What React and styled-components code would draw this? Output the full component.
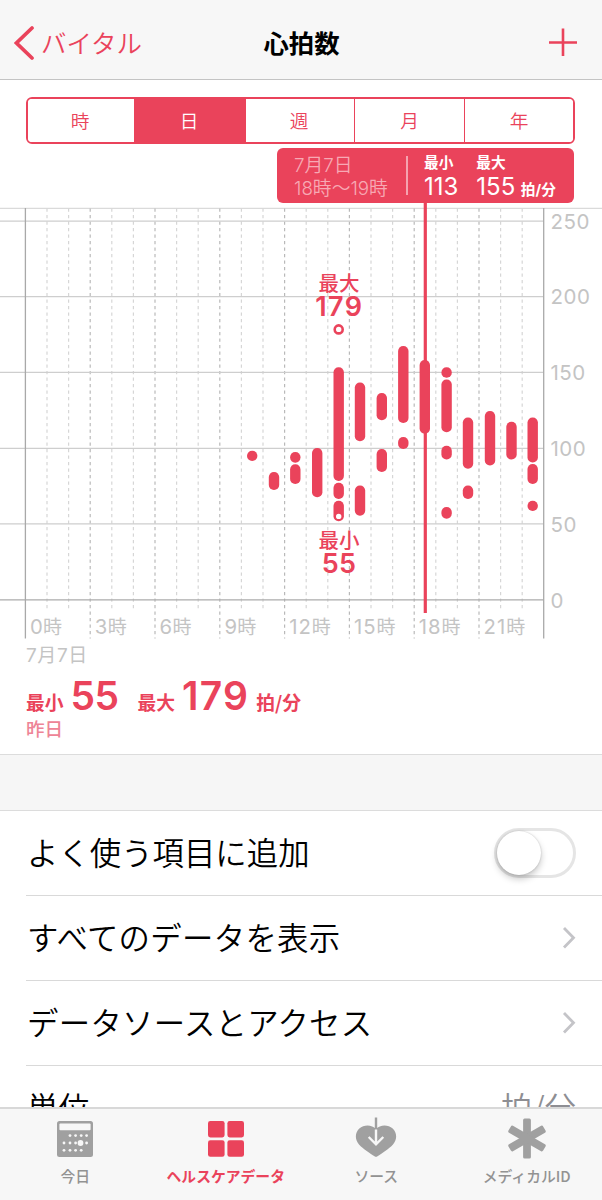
import styled, { createGlobalStyle } from 'styled-components'

const pink = '#ea435b';
const grey = '#c4c4c4';
const sans = `Inter, "Noto Sans CJK JP", sans-serif`;

const GlobalStyle = createGlobalStyle`
  * {
    box-sizing: border-box;
  }

  body {
    margin: 0;
    background-color: white;
    font-family: "Noto Sans CJK JP", sans-serif;
  }
`;

const Screen = styled.div`
  width: 602px;
  height: 1200px;
  display: flex;
  flex-direction: column;
  overflow: hidden;
  color: black;
`;

const Header = styled.header`
  flex: none;
  height: 80px;
  padding: 5px 25px 0 14px;
  display: grid;
  grid-template-columns: 1fr auto 1fr;
  align-items: center;
  background-color: #f7f7f7;
  border-bottom: 1.5px solid #c4c4c4;
`;

const Back = styled.div`
  display: flex;
  align-items: center;
  gap: 7px;
  color: ${pink};
  font-size: 25.5px;
  font-weight: 350;
  line-height: 36px;

  & > svg {
    position: relative;
    top: 1px;
  }
`;

const Title = styled.h1`
  margin: 0 0 0 12px;
  font-size: 25.4px;
  font-weight: 700;
  line-height: 36px;
`;

const Add = styled.div`
  display: flex;
  justify-content: flex-end;
`;

const Segments = styled.div`
  flex: none;
  height: 47px;
  margin: 17px 27px 0 26px;
  display: grid;
  grid-template-columns: 106px 111px 109px 110px 1fr;
  border: 2px solid ${pink};
  border-radius: 6px;
  overflow: hidden;
`;

const Segment = styled.div`
  padding: 0 2px 3px 0;
  display: flex;
  align-items: center;
  justify-content: center;
  font-size: 18.7px;
  font-weight: 350;
  color: ${props => props.active ? 'white' : pink};
  background-color: ${props => props.active ? pink : 'white'};

  & + & {
    border-left: 1.5px solid ${pink};
  }

  &:nth-child(n + 4) {
    padding-right: 0;
  }
`;

const Callout = styled.div`
  flex: none;
  width: 297px;
  height: 55px;
  margin: 4px 0 0 277px;
  padding: 4px 0 0 16px;
  display: flex;
  border-radius: 6px;
  background-color: ${pink};
  color: white;
`;

const When = styled.div`
  width: 115px;
  height: 39px;
  margin-top: 4px;
  padding-left: 1px;
  border-right: 2px solid #f5a3af;
  font-family: ${sans};
  font-size: 18.8px;
  font-weight: 350;
  line-height: 23px;
  color: #f7a9b4;

  & > div {
    margin-top: -2px;
    margin-bottom: 2px;
    white-space: nowrap;
  }
`;

const Stat = styled.div`
  margin-left: ${props => props.gap}px;
  font-size: 14.7px;
  font-weight: 700;
  line-height: 20px;
  white-space: nowrap;
`;

const StatValue = styled.div`
  font-family: ${sans};
  font-size: 14.7px;
  line-height: 29px;

  & > b {
    margin-right: 2px;
    font-size: 24px;
    font-weight: 400;
    letter-spacing: 0;
  }
`;

const Chart = styled.svg`
  flex: none;
  display: block;
  width: 602px;
  height: 436px;
  font-family: ${sans};
`;

const Summary = styled.section`
  flex: none;
  height: 116px;
  padding-left: 26px;
  border-bottom: 1px solid #dcdcdc;
  color: ${pink};
`;

const ChartDate = styled.div`
  height: 29px;
  font-family: ${sans};
  font-size: 19px;
  letter-spacing: .6px;
  line-height: 33px;
  color: ${grey};
`;

const Totals = styled.div`
  height: 48px;
  display: flex;
  align-items: baseline;
  font-size: 18.8px;
  font-weight: 700;
  line-height: 55px;
`;

const Total = styled.span`
  margin: 0 ${props => props.after}px 0 7px;
  font-family: Inter, sans-serif;
  font-size: 39px;
  font-weight: 600;
  letter-spacing: ${props => props.wide ? '1.2px' : '-.6px'};
`;

const Yesterday = styled.div`
  font-size: 18.6px;
  font-weight: 500;
  line-height: 23px;
  color: #ee8496;
`;

const Spacer = styled.div`
  flex: none;
  height: 56px;
  background-color: #f6f6f6;
  border-bottom: 1px solid #dcdcdc;
`;

const List = styled.div`
  flex: 1;
  min-height: 0;
  overflow: hidden;
  padding-left: 26px;
`;

const Row = styled.div`
  height: 85px;
  padding: 0 26px 0 1px;
  display: flex;
  align-items: center;
  justify-content: space-between;
  border-bottom: 1px solid #d9d9d9;
  font-size: 31.4px;
  font-weight: 350;
`;

const Label = styled.span`
  margin-top: -3px;
  letter-spacing: ${props => props.kana ? '.3px' : 'normal'};
`;

const Unit = styled(Label)`
  color: #8e8e93;
`;

const Toggle = styled.div`
  width: 82px;
  height: 50px;
  border: 3px solid #e5e5e5;
  border-radius: 25px;

  &::before {
    content: '';
    display: block;
    width: 44px;
    height: 44px;
    border-radius: 50%;
    background-color: white;
    box-shadow: 0 4px 7px rgba(0, 0, 0, .22), 0 0 2px rgba(0, 0, 0, .2);
  }
`;

const TabBar = styled.nav`
  flex: none;
  height: 93px;
  display: grid;
  grid-template-columns: repeat(4, 1fr);
  background-color: #f7f7f7;
  border-top: 2px solid #d8d8d8;
`;

const Tab = styled.div`
  padding-top: 8px;
  display: flex;
  flex-direction: column;
  align-items: center;
  font-size: 14.8px;
  font-weight: ${props => props.active ? 700 : 500};
  line-height: 24px;
  white-space: nowrap;
  color: ${props => props.active ? pink : '#929292'};

  & > svg {
    margin-bottom: 6px;
  }
`;

// one entry per hour mark: [x, [[top, bottom], ...]]
const bars = [
  [252.2, [[450.7, 461]]],
  [274, [[472, 490]]],
  [295.3, [[452, 462.7], [464.3, 484]]],
  [317.2, [[448, 497.3]]],
  [338.7, [[367.3, 481], [482.7, 499], [500.7, 521.3]]],
  [360, [[382.5, 441.3], [485.5, 515.7]]],
  [381.8, [[393, 420.3], [449, 472]]],
  [403.3, [[346, 423], [437, 449]]],
  [424.8, [[360, 433.7]]],
  [446.6, [[367.3, 377.8], [379.5, 432.3], [445.7, 459.5], [507, 518.7]]],
  [468, [[417.5, 468.7], [485.5, 499]]],
  [490, [[411, 465.5]]],
  [511.5, [[421.7, 459.5]]],
  [532.7, [[417.5, 462.5], [464, 484], [500.7, 511]]],
];

const levels = [[250, 221.2], [200, 296.7], [150, 372.3], [100, 448.3], [50, 523.8], [0, 599.8]];
const hours = Array.from({ length: 23 }, (_, i) => i + 1);
const hourX = hour => 25.4 + hour * 21.6;

function HeartChart() {
  return (
    <Chart viewBox="0 203 602 436">
      <line x1="0" x2="602" y1="208.3" y2="208.3" stroke="#dadada" strokeWidth="1.3" />
      {hours.map(hour => (
        <line
          key={hour}
          x1={hourX(hour)}
          x2={hourX(hour)}
          y1="208.5"
          y2={hour % 3 ? 609.5 : 638.5}
          stroke={hour % 3 ? '#d6d6d6' : '#b9b9b9'}
          strokeWidth="1.2"
          strokeDasharray="3.2 3.3"
        />
      ))}
      {levels.map(([value, y]) => (
        <g key={value}>
          <line x1="0" x2="543.7" y1={y} y2={y} stroke={value ? '#cecece' : '#ababab'} strokeWidth="1.3" />
          <text x="550.5" y={y + 7.7} fontSize="20.5" letterSpacing=".5" fill={grey}>{value}</text>
        </g>
      ))}
      <line x1="25.4" x2="25.4" y1="208" y2="638.5" stroke="#a9a9a9" strokeWidth="1.3" />
      <line x1="543.7" x2="543.7" y1="208" y2="638.5" stroke="#a9a9a9" strokeWidth="1.3" />
      {[0, 3, 6, 9, 12, 15, 18, 21].map(hour => (
        <text key={hour} x={hourX(hour) + 4.6} y="634" fontSize="20.3" letterSpacing={hour > 9 ? 1 : .3} fill={grey}>
          {hour}<tspan fontSize="19">時</tspan>
        </text>
      ))}
      <line x1="425.3" x2="425.3" y1="203" y2="613" stroke={pink} strokeWidth="3.2" />
      {bars.map(([x, parts]) => parts.map(([top, bottom]) => (
        <rect key={`${x}-${top}`} x={x - 5.2} y={top} width="10.4" height={bottom - top} rx="5.1" fill={pink} />
      )))}
      <circle cx="338.7" cy="329.4" r="4" fill="white" stroke={pink} strokeWidth="2.6" />
      <circle cx="338.7" cy="516.4" r="2.7" fill="white" />
      <g fill={pink} textAnchor="middle" fontWeight="500">
        <text x="339" y="290.5" fontSize="20.5" fontFamily="Noto Sans CJK JP">最大</text>
        <text x="339.3" y="316" fontSize="27" fontWeight="600" letterSpacing="1.3">179</text>
        <text x="339" y="547.5" fontSize="20.5" fontFamily="Noto Sans CJK JP">最小</text>
        <text x="339" y="572.5" fontSize="27" fontWeight="600" letterSpacing=".3">55</text>
      </g>
    </Chart>
  );
}

function Chevron() {
  return (
    <svg width="14" height="24" viewBox="0 0 14 24">
      <path d="M2 2l9.5 9.7L2 21.5" fill="none" stroke="#c4c4c8" strokeWidth="2.8" />
    </svg>
  );
}

function CalendarIcon() {
  const dots = [
    [13, 14.6], [18.6, 14.6], [24.2, 14.6], [29.6, 14.6],
    [7, 22], [13, 22], [18.6, 22], [29.6, 22],
    [7, 29.3], [13, 29.3], [18.6, 29.3], [24.2, 29.3],
  ];
  return (
    <svg width="36" height="41" viewBox="0 -4 36 41">
      <rect y="0" width="36" height="36" rx="2.5" fill="#a0a0a0" />
      <rect x="2.4" y="2.4" width="31.2" height="6.8" rx="1" fill="#f7f7f7" />
      {dots.map(([x, y]) => <circle key={`${x}-${y}`} cx={x} cy={y} r="1.4" fill="#f7f7f7" />)}
      <circle cx="23.5" cy="22" r="2.9" fill="#f7f7f7" />
    </svg>
  );
}

function GridIcon() {
  return (
    <svg width="36" height="41" viewBox="0 -4 36 41" fill={pink}>
      <rect width="16.6" height="16.4" rx="2.3" />
      <rect x="19.4" width="16.6" height="16.4" rx="2.3" />
      <rect y="19.3" width="16.6" height="16.4" rx="2.3" />
      <rect x="19.4" y="19.3" width="16.6" height="16.4" rx="2.3" />
    </svg>
  );
}

function SourceIcon() {
  return (
    <svg width="42" height="41" viewBox="0 0 42 41">
      <path d="M21 12C17 7.5 9 7.2 4.3 11.5C-.2 16-.3 22.5 4 27.5C8 32 15.5 36.5 19.5 39.3Q21 40.3 22.5 39.3C26.5 36.5 34 32 38 27.5C42.3 22.5 42.2 16 37.7 11.5C33 7.2 25 7.5 21 12Z" fill="#a0a0a0" />
      <path d="M21 .5V13" stroke="#a0a0a0" strokeWidth="2.4" />
      <path d="M21 12.5V27M13.7 20L21 27.3L28.3 20" fill="none" stroke="#f7f7f7" strokeWidth="2.4" />
    </svg>
  );
}

function MedicalIcon() {
  return (
    <svg width="42" height="41" viewBox="-21 -21.5 42 41" fill="#a0a0a0" overflow="visible">
      {[0, 60, 120].map(angle => (
        <rect key={angle} x="-3.9" y="-20" width="7.8" height="40" rx="1.5" transform={`rotate(${angle})`} />
      ))}
    </svg>
  );
}

export default function App() {
  return (
    <Screen>
      <GlobalStyle />
      <Header>
        <Back>
          <svg width="20" height="34" viewBox="0 0 20 34">
            <path d="M18 2L2.5 17L18 32" fill="none" stroke={pink} strokeWidth="3.7" strokeLinecap="round" />
          </svg>
          バイタル
        </Back>
        <Title>心拍数</Title>
        <Add>
          <svg width="28" height="28" viewBox="0 0 28 28">
            <path d="M0 14.5H28M14 .5V28" stroke={pink} strokeWidth="2.6" />
          </svg>
        </Add>
      </Header>
      <Segments>
        <Segment>時</Segment>
        <Segment active>日</Segment>
        <Segment>週</Segment>
        <Segment>月</Segment>
        <Segment>年</Segment>
      </Segments>
      <Callout>
        <When>
          <div>7月7日</div>
          <div>18時〜19時</div>
        </When>
        <Stat gap={16}>
          最小
          <StatValue><b>113</b></StatValue>
        </Stat>
        <Stat gap={16}>
          最大
          <StatValue><b>155</b> 拍/分</StatValue>
        </Stat>
      </Callout>
      <HeartChart />
      <Summary>
        <ChartDate>7月7日</ChartDate>
        <Totals>
          最小<Total after={19}>55</Total>最大<Total after={7} wide>179</Total>拍/分
        </Totals>
        <Yesterday>昨日</Yesterday>
      </Summary>
      <Spacer />
      <List>
        <Row><Label>よく使う項目に追加</Label><Toggle /></Row>
        <Row><Label kana>すべてのデータを表示</Label><Chevron /></Row>
        <Row><Label kana>データソースとアクセス</Label><Chevron /></Row>
        <Row><Label>単位</Label><Unit>拍/分</Unit></Row>
      </List>
      <TabBar>
        <Tab><CalendarIcon />今日</Tab>
        <Tab active><GridIcon />ヘルスケアデータ</Tab>
        <Tab><SourceIcon />ソース</Tab>
        <Tab><MedicalIcon />メディカルID</Tab>
      </TabBar>
    </Screen>
  );
}
